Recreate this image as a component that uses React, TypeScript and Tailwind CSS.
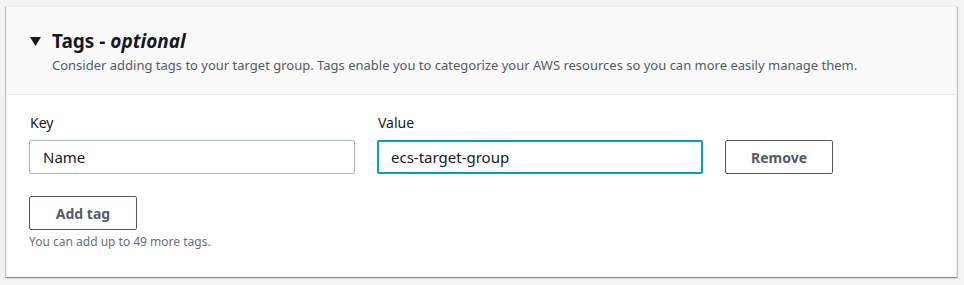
import { useState } from "react";

export default function App() {
  const [tags] = useState([{ key: "Name", value: "ecs-target-group" }]);

  return (
    <div
      className="min-h-[285px] bg-[#f2f3f3] pt-[6px] pl-[6px] pr-[7px] pb-[8px]"
      style={{ fontFamily: '"Noto Sans", "Open Sans", sans-serif' }}
    >
      <div className="bg-white border-l border-t border-r border-[#eaeded] shadow-[0_1px_1px_0_rgba(0,28,36,0.3),1px_1px_1px_0_rgba(0,28,36,0.15),-1px_1px_1px_0_rgba(0,28,36,0.15)]">
        <div className="bg-[#fafafa] border-b border-[#eaeded] pl-[23px] pr-5 pt-[21px] pb-[18px]">
          <div className="flex items-center gap-[11px]">
            <svg width="11" height="9" viewBox="0 0 11 9" className="shrink-0">
              <polygon points="0,0 11,0 5.5,9" fill="#16191f" />
            </svg>
            <h2 className="text-[19px] leading-[26px] font-bold text-[#16191f]">
              Tags - <i className="font-bold">optional</i>
            </h2>
          </div>
          <p className="pl-[22px] text-[13px] leading-[22px] text-[#545b64]">
            Consider adding tags to your target group. Tags enable you to categorize your AWS resources so you can more easily manage them.
          </p>
        </div>
        <div className="px-[22px] pt-[17px] pb-[26px]">
          {tags.map((t) => (
            <div key={t.key} className="flex items-end gap-[22px]">
              <div className="w-[326px]">
                <label className="block text-[14px] leading-[22px] text-[#16191f] mb-[6px] pl-[1px]">Key</label>
                <input
                  readOnly
                  value={t.key}
                  className="w-full h-[34px] border border-[#aab7b8] rounded-[2px] px-[13px] text-[15px] text-[#16191f] outline-none"
                />
              </div>
              <div className="w-[326px]">
                <label className="block text-[14px] leading-[22px] text-[#16191f] mb-[6px] pl-[1px]">Value</label>
                <input
                  readOnly
                  value={t.value}
                  className="w-full h-[34px] border-2 border-[#00a1c9] rounded-[2px] px-[12px] text-[15px] text-[#16191f] outline-none"
                />
              </div>
              <button className="w-[108px] h-[34px] border border-[#545b64] rounded-[2px] bg-white text-[14px] font-bold text-[#545b64]">
                Remove
              </button>
            </div>
          ))}
          <button className="mt-[22px] w-[108px] h-[34px] border border-[#545b64] rounded-[2px] bg-white text-[14px] font-bold text-[#545b64]">
            Add tag
          </button>
          <p className="mt-[3px] text-[12px] leading-[18px] text-[#687078]">You can add up to 49 more tags.</p>
        </div>
      </div>
    </div>
  );
}
